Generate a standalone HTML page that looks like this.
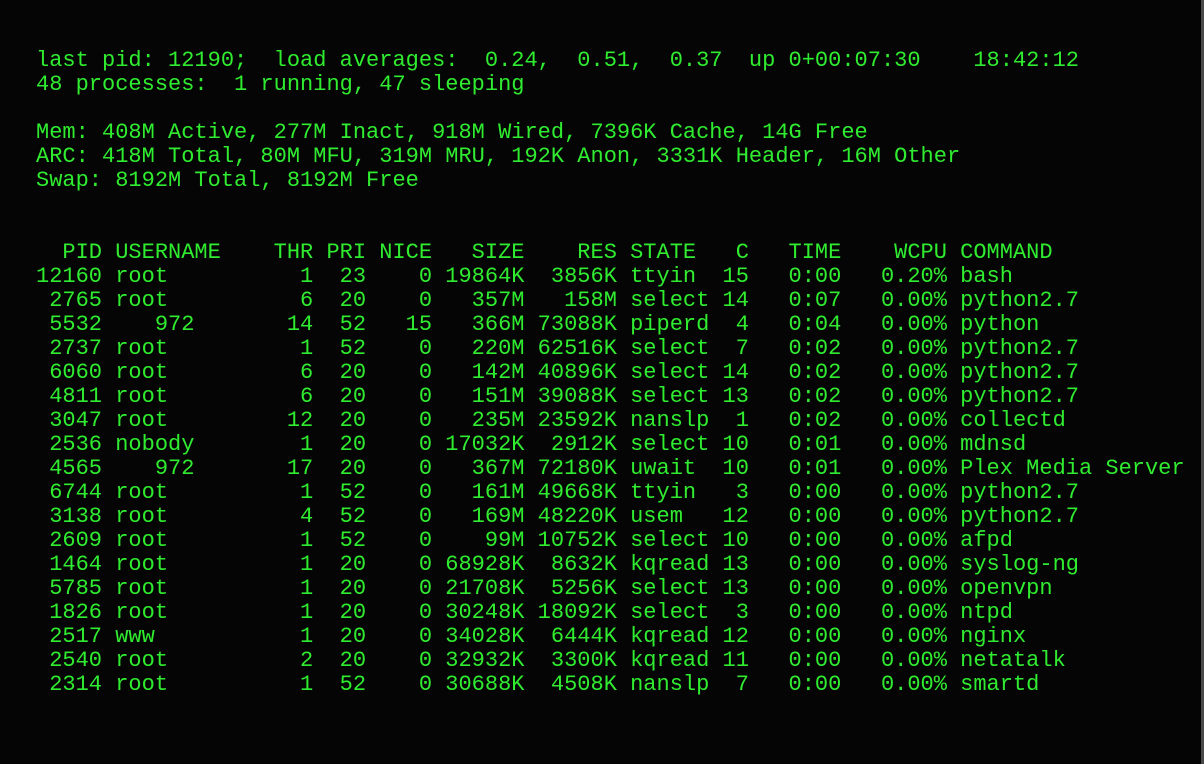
<!DOCTYPE html>
<html><head><meta charset="utf-8"><style>
html,body{margin:0;padding:0;background:#050505;width:1204px;height:764px;overflow:hidden;}
pre{position:absolute;left:36px;top:49px;margin:0;font-family:"Liberation Mono",monospace;font-size:22px;line-height:24px;color:#30ec30;}
.edge{position:absolute;right:0;top:0;width:3px;height:764px;background:#4a4a4a;}
</style></head><body>
<pre>last pid: 12190;  load averages:  0.24,  0.51,  0.37  up 0+00:07:30    18:42:12
48 processes:  1 running, 47 sleeping

Mem: 408M Active, 277M Inact, 918M Wired, 7396K Cache, 14G Free
ARC: 418M Total, 80M MFU, 319M MRU, 192K Anon, 3331K Header, 16M Other
Swap: 8192M Total, 8192M Free


  PID USERNAME    THR PRI NICE   SIZE    RES STATE   C   TIME    WCPU COMMAND
12160 root          1  23    0 19864K  3856K ttyin  15   0:00   0.20% bash
 2765 root          6  20    0   357M   158M select 14   0:07   0.00% python2.7
 5532    972       14  52   15   366M 73088K piperd  4   0:04   0.00% python
 2737 root          1  52    0   220M 62516K select  7   0:02   0.00% python2.7
 6060 root          6  20    0   142M 40896K select 14   0:02   0.00% python2.7
 4811 root          6  20    0   151M 39088K select 13   0:02   0.00% python2.7
 3047 root         12  20    0   235M 23592K nanslp  1   0:02   0.00% collectd
 2536 nobody        1  20    0 17032K  2912K select 10   0:01   0.00% mdnsd
 4565    972       17  20    0   367M 72180K uwait  10   0:01   0.00% Plex Media Server
 6744 root          1  52    0   161M 49668K ttyin   3   0:00   0.00% python2.7
 3138 root          4  52    0   169M 48220K usem   12   0:00   0.00% python2.7
 2609 root          1  52    0    99M 10752K select 10   0:00   0.00% afpd
 1464 root          1  20    0 68928K  8632K kqread 13   0:00   0.00% syslog-ng
 5785 root          1  20    0 21708K  5256K select 13   0:00   0.00% openvpn
 1826 root          1  20    0 30248K 18092K select  3   0:00   0.00% ntpd
 2517 www           1  20    0 34028K  6444K kqread 12   0:00   0.00% nginx
 2540 root          2  20    0 32932K  3300K kqread 11   0:00   0.00% netatalk
 2314 root          1  52    0 30688K  4508K nanslp  7   0:00   0.00% smartd</pre>
<div class="edge"></div>
</body></html>
